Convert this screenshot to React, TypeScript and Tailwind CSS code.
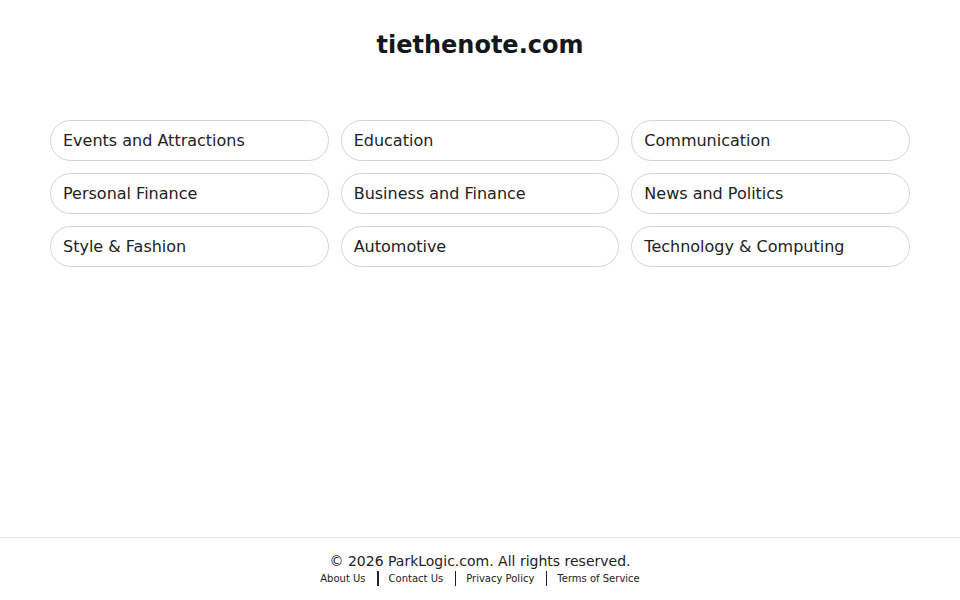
const categories = [
  "Events and Attractions",
  "Education",
  "Communication",
  "Personal Finance",
  "Business and Finance",
  "News and Politics",
  "Style & Fashion",
  "Automotive",
  "Technology & Computing",
];

const links = ["About Us", "Contact Us", "Privacy Policy", "Terms of Service"];

export default function App() {
  return (
    <div
      className="min-h-screen flex flex-col bg-white text-[#1f2328]"
      style={{ fontFamily: '"DejaVu Sans", sans-serif' }}
    >
      <main className="flex-1">
        <h1 className="pt-[29px] text-center text-2xl leading-8 font-bold text-[#15171c]">
          tiethenote.com
        </h1>
        <div className="mx-[50px] mt-[59px] grid grid-cols-3 gap-x-3 gap-y-3">
          {categories.map((c) => (
            <a
              key={c}
              href="#"
              className="flex items-center h-[41px] px-[12px] rounded-full border border-[#d4d4d4] text-base text-[#222]"
            >
              {c}
            </a>
          ))}
        </div>
      </main>
      <footer className="border-t border-[#e5e5e5] pt-[14px] pb-[14px] flex flex-col items-center">
        <p className="text-sm leading-[18px] text-[#222]">© 2026 ParkLogic.com. All rights reserved.</p>
        <div className="flex items-center text-[10px] leading-[14px] text-[#222] mt-[1px]">
          {links.map((l, i) => (
            <div key={l} className="flex items-center">
              {i > 0 && <span className="ml-[11.5px] mr-[10px] w-[1.5px] h-[15px] bg-[#222]" />}
              <a href="#">{l}</a>
            </div>
          ))}
        </div>
      </footer>
    </div>
  );
}
